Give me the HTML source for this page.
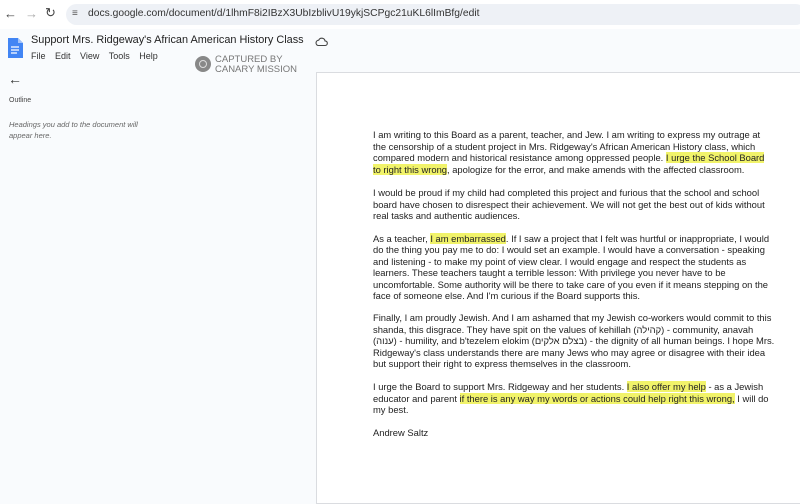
<!DOCTYPE html><html><head><meta charset="utf-8"><style>
body{margin:0;width:800px;height:491px;overflow:hidden;background:#f9fbfd;font-family:"Liberation Sans",Arial,sans-serif;position:relative}
.top{position:absolute;left:0;top:0;width:800px;height:29px;background:#fff}
.url{position:absolute;left:66px;top:4px;width:740px;height:21px;border-radius:11px;background:#eef1f6}
.a{position:absolute;white-space:nowrap}
.page{position:absolute;left:316px;top:72px;width:490px;height:430px;background:#fff;border:1px solid #dadce0}
.l{position:absolute;left:373px;white-space:nowrap;font-size:9.4px;line-height:12px;color:#222;font-family:"Liberation Sans","DejaVu Sans",sans-serif}
.h{background:#f1f36a}
</style></head><body>
<div class="top"></div>
<div class="url"></div>
<div class="a" style="left:4px;top:6px;font-size:13px;color:#444">&#8592;</div>
<div class="a" style="left:25px;top:6px;font-size:13px;color:#aaa">&#8594;</div>
<div class="a" style="left:45px;top:5px;font-size:13px;color:#444">&#8635;</div>
<div class="a" style="left:72px;top:8px;font-size:10px;color:#555">&#8801;</div>
<div class="a" style="left:88px;top:8px;font-size:10.3px;color:#333">docs.google.com/document/d/1lhmF8i2IBzX3UbIzblivU19ykjSCPgc21uKL6lImBfg/edit</div>
<svg class="a" style="left:7px;top:37px" width="16" height="22"><path d="M1 1h10l5 5v15H1z" fill="#4285f4"/><path d="M11 1v5h5z" fill="#a1c2fa"/><path d="M4 10h8M4 13h8M4 16h6" stroke="#fff" stroke-width="1.3"/></svg>
<div class="a" style="left:31px;top:34px;font-size:10.9px;color:#222">Support Mrs. Ridgeway's African American History Class</div>
<div class="a" style="left:31px;top:51px;font-size:9px;color:#333;word-spacing:7px">File Edit View Tools Help</div>
<svg class="a" style="left:315px;top:36px" width="13" height="11"><path d="M3 9.5h7a2.3 2.3 0 0 0 0-4.6A3.3 3.3 0 0 0 3.7 4.2 2.7 2.7 0 0 0 3 9.5z" fill="none" stroke="#444" stroke-width="1.1"/></svg>
<div class="a" style="left:195px;top:56px;width:16px;height:16px;border-radius:50%;background:#888"></div>
<div class="a" style="left:199px;top:60px;width:8px;height:8px;border-radius:50%;border:1px solid #ddd;box-sizing:border-box"></div>
<div class="a" style="left:215px;top:55px;font-size:9.5px;line-height:10px;color:#777">CAPTURED BY<br>CANARY MISSION</div>
<div class="a" style="left:8px;top:71px;font-size:14px;color:#333">&#8592;</div>
<div class="a" style="left:9px;top:97px;font-size:7px;color:#444">Outline</div>
<div class="a" style="left:9px;top:120px;font-size:7.5px;color:#666;font-style:italic;line-height:10.5px">Headings you add to the document will<br>appear here.</div>
<div class="page"></div>
<div class="l" style="top:129px">I am writing to this Board as a parent, teacher, and Jew. I am writing to express my outrage at</div>
<div class="l" style="top:140.5px">the censorship of a student project in Mrs. Ridgeway's African American History class, which</div>
<div class="l" style="top:152px">compared modern and historical resistance among oppressed people. <span class="h">I urge the School Board</span></div>
<div class="l" style="top:163.5px"><span class="h">to right this wrong</span>, apologize for the error, and make amends with the affected classroom.</div>
<div class="l" style="top:187px">I would be proud if my child had completed this project and furious that the school and school</div>
<div class="l" style="top:198.5px">board have chosen to disrespect their achievement. We will not get the best out of kids without</div>
<div class="l" style="top:210px">real tasks and authentic audiences.</div>
<div class="l" style="top:232.5px">As a teacher, <span class="h">I am embarrassed</span>. If I saw a project that I felt was hurtful or inappropriate, I would</div>
<div class="l" style="top:244px">do the thing you pay me to do: I would set an example. I would have a conversation - speaking</div>
<div class="l" style="top:255.5px">and listening - to make my point of view clear. I would engage and respect the students as</div>
<div class="l" style="top:267px">learners. These teachers taught a terrible lesson: With privilege you never have to be</div>
<div class="l" style="top:278.5px">uncomfortable. Some authority will be there to take care of you even if it means stepping on the</div>
<div class="l" style="top:290px">face of someone else. And I'm curious if the Board supports this.</div>
<div class="l" style="top:312px">Finally, I am proudly Jewish. And I am ashamed that my Jewish co-workers would commit to this</div>
<div class="l" style="top:323.5px">shanda, this disgrace. They have spit on the values of kehillah (קהילה) - community, anavah</div>
<div class="l" style="top:335px">(ענוה) - humility, and b'tezelem elokim (בצלם אלקים) - the dignity of all human beings. I hope Mrs.</div>
<div class="l" style="top:346.5px">Ridgeway's class understands there are many Jews who may agree or disagree with their idea</div>
<div class="l" style="top:358px">but support their right to express themselves in the classroom.</div>
<div class="l" style="top:381px">I urge the Board to support Mrs. Ridgeway and her students. <span class="h">I also offer my help</span> - as a Jewish</div>
<div class="l" style="top:392.5px">educator and parent <span class="h">if there is any way my words or actions could help right this wrong,</span> I will do</div>
<div class="l" style="top:404px">my best.</div>
<div class="l" style="top:427px">Andrew Saltz</div>
</body></html>
